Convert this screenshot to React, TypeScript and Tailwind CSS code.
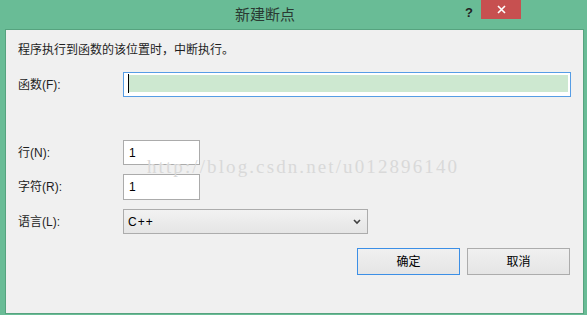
import React from "react";

const ui = {
  fontFamily: '"Liberation Sans", "Noto Sans CJK SC", sans-serif',
};

function Field({ label, children }: { label: string; children: React.ReactNode }) {
  return (
    <div className="flex items-center">
      <div className="w-[105px] text-[12px] text-[#1e1e1e]">{label}</div>
      {children}
    </div>
  );
}

function TextBox({ value, h = "h-[25px]" }: { value: string; h?: string }) {
  return (
    <div className={`flex ${h} w-[77px] items-center border border-[#ababab] bg-white pl-[5px] text-[12px] text-black`}>
      {value}
    </div>
  );
}

export default function App() {
  return (
    <div className="relative flex h-[315px] w-[587px] flex-col bg-[#69bc96]" style={ui}>
      {/* title bar */}
      <div className="relative flex h-[29px] shrink-0 items-start">
        <div className="absolute left-[235px] top-[6px] text-[15px] leading-[18px] text-[#2a3a32]">
          新建断点
        </div>
        <div className="absolute left-[465px] top-[3px] text-[13px] font-bold text-[#222]">?</div>
        <div className="absolute left-[481px] top-0 flex h-[19px] w-[40px] items-center justify-center bg-[#c75050]">
          <svg width="9" height="9" viewBox="0 0 9 9">
            <path d="M1 1 L8 8 M8 1 L1 8" stroke="#fff" strokeWidth="1.6" />
          </svg>
        </div>
      </div>

      {/* client area */}
      <div className="ml-[5px] mr-[3px] mb-[1px] flex flex-1 flex-col border border-[#56a37f] bg-[#f0f0f0] pl-[12px] pr-[12px] pt-[12px]">
        <div className="text-[12px] leading-[16px] text-[#1e1e1e]">
          程序执行到函数的该位置时，中断执行。
        </div>

        <div className="mt-[14px]">
          <Field label="函数(F):">
            <div className="h-[25px] w-[448px] border border-[#569de5] bg-white pl-[4px] pr-[2px] pt-[2px]">
              <div className="flex h-[17px] items-center bg-[#cde8d0]">
                <div className="h-[19px] w-px bg-black" />
              </div>
            </div>
          </Field>
        </div>

        <div className="mt-[43px] flex flex-col gap-[9px]">
          <Field label="行(N):">
            <TextBox value="1" />
          </Field>
          <Field label="字符(R):">
            <TextBox value="1" h="h-[26px]" />
          </Field>
          <Field label="语言(L):">
            <div className="flex h-[25px] w-[245px] items-center justify-between border border-[#acacac] bg-gradient-to-b from-[#f2f2f2] to-[#e5e5e5] pl-[4px] pr-[6px] text-[12px] text-black">
              <span className="tracking-[1px]">C++</span>
              <svg width="8" height="6" viewBox="0 0 8 6">
                <path d="M1 1 L4 4 L7 1" stroke="#404040" strokeWidth="1.6" fill="none" />
              </svg>
            </div>
          </Field>
        </div>

        <div className="mt-[14px] flex justify-end gap-[7px] pr-px">
          <button className="h-[27px] w-[103px] border border-[#3c8fe6] bg-gradient-to-b from-[#f0f0f0] to-[#e5e5e5] text-[12px] text-black">
            确定
          </button>
          <button className="h-[27px] w-[103px] border border-[#acacac] bg-gradient-to-b from-[#f0f0f0] to-[#e5e5e5] text-[12px] text-black">
            取消
          </button>
        </div>
      </div>

      {/* watermark */}
      <div
        className="pointer-events-none absolute left-[147px] top-[156px] text-[19px] leading-[22px] tracking-[2.1px] text-[#d9d9d9]"
        style={{ fontFamily: '"Liberation Serif", serif' }}
      >
        http://blog.csdn.net/u012896140
      </div>
    </div>
  );
}
